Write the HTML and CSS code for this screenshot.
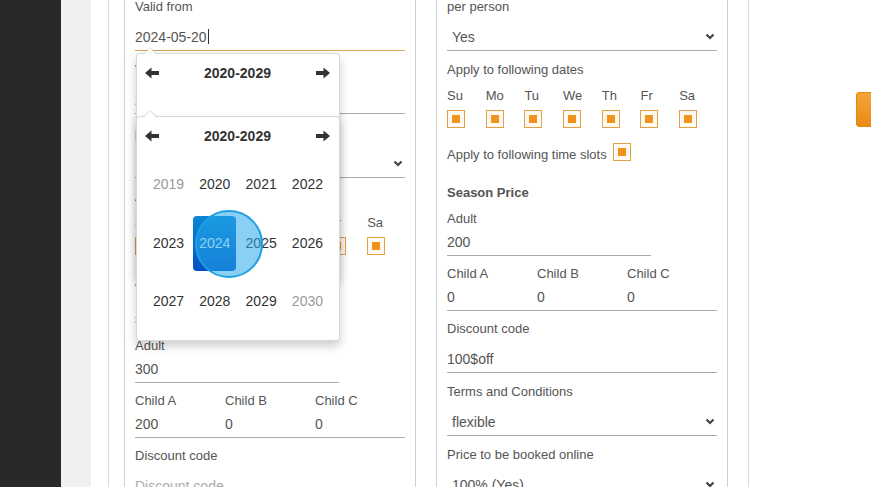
FILE: index.html
```html
<!DOCTYPE html>
<html lang="en">
<head>
    <meta charset="UTF-8">
    <meta name="viewport" content="width=device-width, initial-scale=1.0">
    <title>Season Prices</title>
    <link rel="stylesheet" href="styles.css">
</head>
<body>
    <div class="layout">
        <div class="sidebar"></div>
        <div class="gutter"></div>
        <div class="panel">
            <div class="form-wrap">

                <!-- season 1 -->
                <div class="card">
                    <div class="field">
                        <label class="field-label">Valid from</label>
                        <div class="field-input is-focused">2024-05-20<span class="caret"></span></div>
                        <div class="datepicker">
                            <div class="dp-head">
                                <svg class="dp-arrow" width="14" height="12" viewBox="0 0 14 12"><path d="M0 6 L6.5 0.5 V4 H14 V8 H6.5 V11.5 Z"/></svg>
                                <span>2020-2029</span>
                                <svg class="dp-arrow" width="14" height="12" viewBox="0 0 14 12"><path d="M14 6 L7.5 0.5 V4 H0 V8 H7.5 V11.5 Z"/></svg>
                            </div>
                            <div class="dp-years">
                                <span class="dp-year is-muted">2019</span>
                                <span class="dp-year">2020</span>
                                <span class="dp-year">2021</span>
                                <span class="dp-year">2022</span>
                                <span class="dp-year">2023</span>
                                <span class="dp-year is-active">2024</span>
                                <span class="dp-year">2025</span>
                                <span class="dp-year">2026</span>
                                <span class="dp-year">2027</span>
                                <span class="dp-year">2028</span>
                                <span class="dp-year">2029</span>
                                <span class="dp-year is-muted">2030</span>
                            </div>
                        </div>
                    </div>

                    <div class="field field-date">
                        <label class="field-label">Valid to</label>
                        <input class="field-input" type="text" value="2024-09-30">
                        <div class="datepicker">
                            <div class="dp-head">
                                <svg class="dp-arrow" width="14" height="12" viewBox="0 0 14 12"><path d="M0 6 L6.5 0.5 V4 H14 V8 H6.5 V11.5 Z"/></svg>
                                <span>2020-2029</span>
                                <svg class="dp-arrow" width="14" height="12" viewBox="0 0 14 12"><path d="M14 6 L7.5 0.5 V4 H0 V8 H7.5 V11.5 Z"/></svg>
                            </div>
                            <div class="dp-years">
                                <span class="dp-year is-muted">2019</span>
                                <span class="dp-year">2020</span>
                                <span class="dp-year">2021</span>
                                <span class="dp-year">2022</span>
                                <span class="dp-year">2023</span>
                                <span class="dp-year is-active">2024</span>
                                <span class="dp-year">2025</span>
                                <span class="dp-year">2026</span>
                                <span class="dp-year">2027</span>
                                <span class="dp-year">2028</span>
                                <span class="dp-year">2029</span>
                                <span class="dp-year is-muted">2030</span>
                            </div>
                            <!-- touch marker over the picked year -->
                            <span class="click-mark"></span>
                        </div>
                    </div>

                    <div class="field">
                        <label class="field-label">per person</label>
                        <div class="field-select">
                            <span>Yes</span>
                            <svg width="10" height="7" viewBox="0 0 10 7"><polyline points="1.5,1.5 5,5 8.5,1.5"/></svg>
                        </div>
                    </div>

                    <div class="group-label">Apply to following dates</div>
                    <div class="days">
                        <div class="day"><span>Su</span><span class="check"></span></div>
                        <div class="day"><span>Mo</span><span class="check"></span></div>
                        <div class="day"><span>Tu</span><span class="check"></span></div>
                        <div class="day"><span>We</span><span class="check"></span></div>
                        <div class="day"><span>Th</span><span class="check"></span></div>
                        <div class="day"><span>Fr</span><span class="check"></span></div>
                        <div class="day"><span>Sa</span><span class="check"></span></div>
                    </div>
                    <div class="time-row">
                        <span>Apply to following time slots</span>
                        <span class="check"></span>
                    </div>

                    <div class="section-title">Season Price</div>
                    <div class="price-field adult">
                        <label class="field-label">Adult</label>
                        <input class="field-input" type="text" value="300">
                    </div>
                    <div class="child-row">
                        <div class="price-field">
                            <label class="field-label">Child A</label>
                            <input class="field-input" type="text" value="200">
                        </div>
                        <div class="price-field">
                            <label class="field-label">Child B</label>
                            <input class="field-input" type="text" value="0">
                        </div>
                        <div class="price-field">
                            <label class="field-label">Child C</label>
                            <input class="field-input" type="text" value="0">
                        </div>
                    </div>

                    <div class="field">
                        <label class="field-label">Discount code</label>
                        <input class="field-input" type="text" placeholder="Discount code">
                    </div>
                    <div class="field">
                        <label class="field-label">Terms and Conditions</label>
                        <div class="field-select">
                            <span>flexible</span>
                            <svg width="10" height="7" viewBox="0 0 10 7"><polyline points="1.5,1.5 5,5 8.5,1.5"/></svg>
                        </div>
                    </div>
                </div>

                <!-- season 2 -->
                <div class="card">
                    <div class="field">
                        <label class="field-label">per person</label>
                        <div class="field-select">
                            <span>Yes</span>
                            <svg width="10" height="7" viewBox="0 0 10 7"><polyline points="1.5,1.5 5,5 8.5,1.5"/></svg>
                        </div>
                    </div>

                    <div class="group-label">Apply to following dates</div>
                    <div class="days">
                        <div class="day"><span>Su</span><span class="check"></span></div>
                        <div class="day"><span>Mo</span><span class="check"></span></div>
                        <div class="day"><span>Tu</span><span class="check"></span></div>
                        <div class="day"><span>We</span><span class="check"></span></div>
                        <div class="day"><span>Th</span><span class="check"></span></div>
                        <div class="day"><span>Fr</span><span class="check"></span></div>
                        <div class="day"><span>Sa</span><span class="check"></span></div>
                    </div>
                    <div class="time-row">
                        <span>Apply to following time slots</span>
                        <span class="check"></span>
                    </div>

                    <div class="section-title">Season Price</div>
                    <div class="price-field adult">
                        <label class="field-label">Adult</label>
                        <input class="field-input" type="text" value="200">
                    </div>
                    <div class="child-row">
                        <div class="price-field">
                            <label class="field-label">Child A</label>
                            <input class="field-input" type="text" value="0">
                        </div>
                        <div class="price-field">
                            <label class="field-label">Child B</label>
                            <input class="field-input" type="text" value="0">
                        </div>
                        <div class="price-field">
                            <label class="field-label">Child C</label>
                            <input class="field-input" type="text" value="0">
                        </div>
                    </div>

                    <div class="field">
                        <label class="field-label">Discount code</label>
                        <input class="field-input" type="text" value="100$off">
                    </div>
                    <div class="field">
                        <label class="field-label">Terms and Conditions</label>
                        <div class="field-select">
                            <span>flexible</span>
                            <svg width="10" height="7" viewBox="0 0 10 7"><polyline points="1.5,1.5 5,5 8.5,1.5"/></svg>
                        </div>
                    </div>
                    <div class="field">
                        <label class="field-label">Price to be booked online</label>
                        <div class="field-select">
                            <span>100% (Yes)</span>
                            <svg width="10" height="7" viewBox="0 0 10 7"><polyline points="1.5,1.5 5,5 8.5,1.5"/></svg>
                        </div>
                    </div>
                </div>
            </div>

            <div class="actions">
                <button class="btn-save">Save</button>
            </div>
        </div>
    </div>
</body>
</html>
```

FILE: styles.css
```css
* {
    box-sizing: border-box;
}
body {
    margin: 0;
    height: 100vh;
    overflow: hidden;
    font-family: "Liberation Sans", Arial, sans-serif;
    color: #555;
}
.layout {
    display: flex;
    height: 100%;
}
.sidebar {
    width: 61px;
    flex-shrink: 0;
    background: #292929;
}
.gutter {
    width: 30px;
    flex-shrink: 0;
    background: #f0f0f0;
}
.panel {
    flex: 1;
    display: flex;
    align-items: flex-start;
    padding-left: 17px;
    background: #fff;
    overflow: hidden;
}
.form-wrap {
    display: flex;
    gap: 20px;
    flex-shrink: 0;
    margin-top: -30px;
    min-height: calc(100vh + 60px);
    padding: 0 20px 0 15px;
    border-left: 1px solid #dcdcdc;
    border-right: 1px solid #dcdcdc;
}
.card {
    width: 292px;
    padding: 27px 10px 20px;
    border: 1px solid #cfcfcf;
}

/* fields */
.field {
    position: relative;
    margin-bottom: 10px;
}
.field-date {
    margin-bottom: 11px;
}
.field-label {
    display: block;
    font-size: 13px;
    line-height: 18px;
    margin-bottom: 7px;
}
.field-input {
    display: block;
    width: 100%;
    height: 28px;
    padding: 0;
    border: 0;
    border-bottom: 1px solid #aaa;
    background: transparent;
    font: 14px "Liberation Sans", Arial, sans-serif;
    color: #555;
    outline: none;
}
.field-input::placeholder {
    color: #aaa;
}
.field-input.is-focused {
    display: flex;
    align-items: center;
    border-bottom-color: #dba65a;
}
.caret {
    width: 1px;
    height: 15px;
    margin-left: 1px;
    background: #333;
}
.field-select {
    display: flex;
    align-items: center;
    justify-content: space-between;
    height: 28px;
    padding: 0 2px 0 5px;
    border-bottom: 1px solid #aaa;
    font-size: 14px;
}
.field-select polyline {
    fill: none;
    stroke: #444;
    stroke-width: 2.2;
}

/* weekdays */
.group-label {
    font-size: 13px;
    line-height: 18px;
    margin-bottom: 8px;
}
.days {
    display: grid;
    grid-template-columns: repeat(7, 38.7px);
}
.day {
    display: flex;
    flex-direction: column;
    align-items: flex-start;
    font-size: 13px;
    line-height: 18px;
}
.day .check {
    margin-top: 5px;
}
.check {
    display: flex;
    align-items: center;
    justify-content: center;
    width: 18px;
    height: 18px;
    border: 1px solid #e3a24a;
    background: #fffaf1;
}
.check::after {
    content: "";
    width: 8px;
    height: 8px;
    background: #f0921e;
}
.time-row {
    display: flex;
    align-items: flex-start;
    margin-top: 15px;
    font-size: 13px;
    line-height: 18px;
}
.time-row span:first-child {
    margin-top: 3px;
}
.time-row .check {
    margin-left: 6px;
}

/* prices */
.section-title {
    margin: 20px 0 8px;
    font-size: 13px;
    line-height: 18px;
    font-weight: bold;
}
.price-field {
    margin-bottom: 9px;
}
.price-field .field-label {
    margin-bottom: 0;
}
.adult {
    width: 204px;
}
.child-row {
    display: grid;
    grid-template-columns: repeat(3, 1fr);
}

/* year picker */
.datepicker {
    position: absolute;
    top: calc(100% + 2px);
    left: 1px;
    z-index: 10;
    width: 204px;
    padding: 4px;
    background: #fff;
    border: 1px solid rgba(0, 0, 0, 0.15);
    border-radius: 4px;
    box-shadow: 0 5px 10px rgba(0, 0, 0, 0.2);
}
.datepicker::before {
    content: "";
    position: absolute;
    top: -7px;
    left: 6px;
    border-left: 7px solid transparent;
    border-right: 7px solid transparent;
    border-bottom: 7px solid rgba(0, 0, 0, 0.15);
}
.datepicker::after {
    content: "";
    position: absolute;
    top: -6px;
    left: 7px;
    border-left: 6px solid transparent;
    border-right: 6px solid transparent;
    border-bottom: 6px solid #fff;
}
.dp-head {
    display: flex;
    align-items: center;
    justify-content: space-between;
    height: 30px;
    padding: 0 5px 0 4px;
    font-size: 14px;
    font-weight: bold;
    color: #333;
}
.dp-arrow {
    fill: #333;
}
.dp-years {
    display: grid;
    grid-template-columns: repeat(4, 43px);
    column-gap: 3.3px;
    row-gap: 3.5px;
    justify-content: center;
    margin: 6px 0 7px;
}
.dp-year {
    height: 55px;
    line-height: 55px;
    text-align: center;
    font-size: 14px;
    color: #333;
    border-radius: 4px;
}
.dp-year.is-muted {
    color: #999;
}
.dp-year.is-active {
    background: linear-gradient(to bottom, #0a88d6, #0350c4);
    color: #fff;
}
.click-mark {
    position: absolute;
    left: 58px;
    top: 93px;
    width: 68px;
    height: 68px;
    border-radius: 50%;
    border: 2px solid #1fa0e4;
    background: rgba(40, 170, 235, 0.55);
}

/* right column */
.actions {
    flex-shrink: 0;
    margin-left: 107px;
    padding-top: 92px;
}
.btn-save {
    width: 90px;
    height: 35px;
    padding-left: 30px;
    border: 1px solid #e2880f;
    border-radius: 3px;
    background: linear-gradient(to bottom, #f4a53c, #ea8a14);
    color: #fff;
    font: 14px "Liberation Sans", Arial, sans-serif;
}
```
